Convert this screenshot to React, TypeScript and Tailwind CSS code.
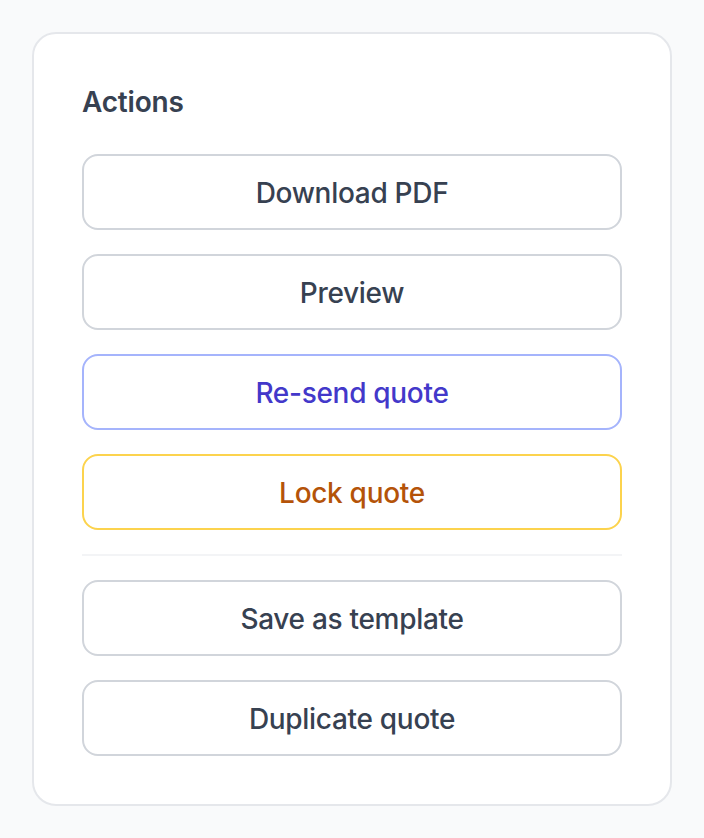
const actions = [
  { label: "Download PDF", tone: "border-[#d1d5db] text-[#374151]" },
  { label: "Preview", tone: "border-[#d1d5db] text-[#374151]" },
  { label: "Re-send quote", tone: "border-[#a5b4fc] text-[#4338ca]" },
  { label: "Lock quote", tone: "border-[#fcd34d] text-[#b45309]" },
];

const more = ["Save as template", "Duplicate quote"];

function ActionButton({ label, tone }: { label: string; tone: string }) {
  return (
    <button
      type="button"
      className={`w-full rounded-[16px] border-2 bg-white pt-[17px] pb-[15px] text-[28px] leading-[40px] font-medium tracking-[-0.3px] ${tone}`}
    >
      {label}
    </button>
  );
}

export default function App() {
  return (
    <div
      className="min-h-[838px] bg-[#f9fafb] p-[32px]"
      style={{ fontFamily: "Inter, 'Noto Sans', sans-serif" }}
    >
      <div className="rounded-[24px] border-2 border-[#e5e7eb] bg-white p-[48px]">
        <h2 className="mb-[32px] text-[28px] leading-[40px] font-semibold text-[#374151] tracking-[-0.2px]">
          Actions
        </h2>
        <div className="flex flex-col gap-[24px]">
          {actions.map((a) => (
            <ActionButton key={a.label} label={a.label} tone={a.tone} />
          ))}
          <div className="h-[2px] bg-[#f3f4f6]" />
          {more.map((label) => (
            <ActionButton key={label} label={label} tone="border-[#d1d5db] text-[#374151]" />
          ))}
        </div>
      </div>
    </div>
  );
}
